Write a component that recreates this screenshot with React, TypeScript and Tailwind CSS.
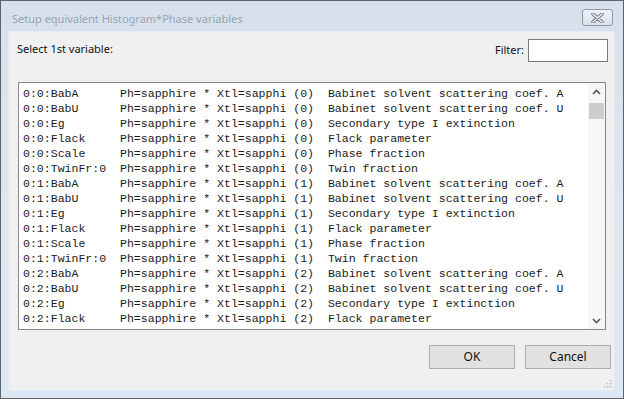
import React from "react";

const uiFont = { fontFamily: '"Noto Sans", "Open Sans", sans-serif' };

const params = [
  ["BabA", "Babinet solvent scattering coef. A"],
  ["BabU", "Babinet solvent scattering coef. U"],
  ["Eg", "Secondary type I extinction"],
  ["Flack", "Flack parameter"],
  ["Scale", "Phase fraction"],
  ["TwinFr:0", "Twin fraction"],
];

const rows: string[] = [];
for (let h = 0; h < 3; h++) {
  for (const [name, desc] of params) {
    const key = `0:${h}:${name}`;
    rows.push(`${key.padEnd(14)}Ph=sapphire * Xtl=sapphi (${h})  ${desc}`);
  }
}
// only the rows that fit in the list box
const visibleRows = rows.slice(0, 16);

function CloseButton() {
  return (
    <div className="flex h-[17px] w-[31px] items-center justify-center rounded-[3px] border border-[#8e99a8] bg-gradient-to-b from-[#eef2f7] to-[#d9e1ea]">
      <svg width="13" height="10" viewBox="0 0 13 10">
        <path
          d="M2 1 L11 9 M11 1 L2 9"
          stroke="#6b7480"
          strokeWidth="3.4"
          strokeLinecap="round"
        />
        <path
          d="M2 1 L11 9 M11 1 L2 9"
          stroke="#f4f6f9"
          strokeWidth="1.6"
          strokeLinecap="round"
        />
      </svg>
    </div>
  );
}

function Scrollbar() {
  return (
    <div className="flex w-[17px] flex-col bg-[#f6f6f6]">
      <div className="flex h-[17px] items-center justify-center">
        <svg width="9" height="6" viewBox="0 0 9 6">
          <path d="M1 5 L4.5 1.5 L8 5" fill="none" stroke="#555" strokeWidth="1.6" />
        </svg>
      </div>
      <div className="mx-[1px] mt-[3px] h-[16px] bg-[#cdcdcd]" />
      <div className="flex-1" />
      <div className="flex h-[17px] items-center justify-center">
        <svg width="9" height="6" viewBox="0 0 9 6">
          <path d="M1 1 L4.5 4.5 L8 1" fill="none" stroke="#555" strokeWidth="1.6" />
        </svg>
      </div>
    </div>
  );
}

function Button({ label }: { label: string }) {
  return (
    <div
      className="flex h-[24px] w-[86px] items-center justify-center border border-[#adadad] bg-[#e1e1e1] text-[12px] text-[#111]"
      style={uiFont}
    >
      {label}
    </div>
  );
}

export default function App() {
  return (
    <div className="flex h-[399px] w-[624px] flex-col border border-[#5f6368] bg-gradient-to-b from-[#d5e0ec] via-[#dde7f2] to-[#dce7f4]">
      {/* title bar */}
      <div className="flex h-[30px] justify-between pl-[11px] pr-[10px]">
        <span className="pt-[10px] text-[11px] leading-[16px] text-[#9aa4af]" style={uiFont}>
          Setup equivalent Histogram*Phase variables
        </span>
        <div className="pt-[8px]">
          <CloseButton />
        </div>
      </div>

      {/* client area */}
      <div className="mb-[7px] ml-[7px] mr-[8px] flex flex-1 flex-col border border-[#e3ebf4] bg-[#f0f0f0]">
        <div className="flex items-start justify-between pl-[8px] pr-[6px] pt-[7px]">
          <span className="pt-[2px] text-[11px] text-[#111]" style={uiFont}>
            Select 1st variable:
          </span>
          <div className="flex items-center gap-[4px]">
            <span className="text-[11px] text-[#111]" style={uiFont}>
              Filter:
            </span>
            <div className="h-[23px] w-[80px] border border-[#7a7a7a] bg-white" />
          </div>
        </div>

        <div className="ml-[9px] mr-[8px] mt-[20px] flex h-[248px] border border-[#828790] bg-white">
          <div className="flex-1 overflow-hidden pl-[4px] pt-[3px]">
            {visibleRows.map((r) => (
              <div
                key={r}
                className="h-[15px] whitespace-pre text-[11.55px] leading-[15px] text-[#1a1a1a]"
                style={{ fontFamily: '"Liberation Mono", "Courier New", monospace' }}
              >
                {r}
              </div>
            ))}
          </div>
          <Scrollbar />
        </div>

        <div className="mt-[15px] flex justify-end gap-[10px] pr-[3px]">
          <Button label="OK" />
          <Button label="Cancel" />
        </div>

        <div className="flex flex-1 items-end justify-end pb-[2px] pr-[2px]">
          <svg width="10" height="10" viewBox="0 0 10 10">
            {[
              [8, 2],
              [5, 5],
              [8, 5],
              [2, 8],
              [5, 8],
              [8, 8],
            ].map(([x, y]) => (
              <rect key={`${x}-${y}`} x={x} y={y} width="1.5" height="1.5" fill="#b8bec6" />
            ))}
          </svg>
        </div>
      </div>
    </div>
  );
}
